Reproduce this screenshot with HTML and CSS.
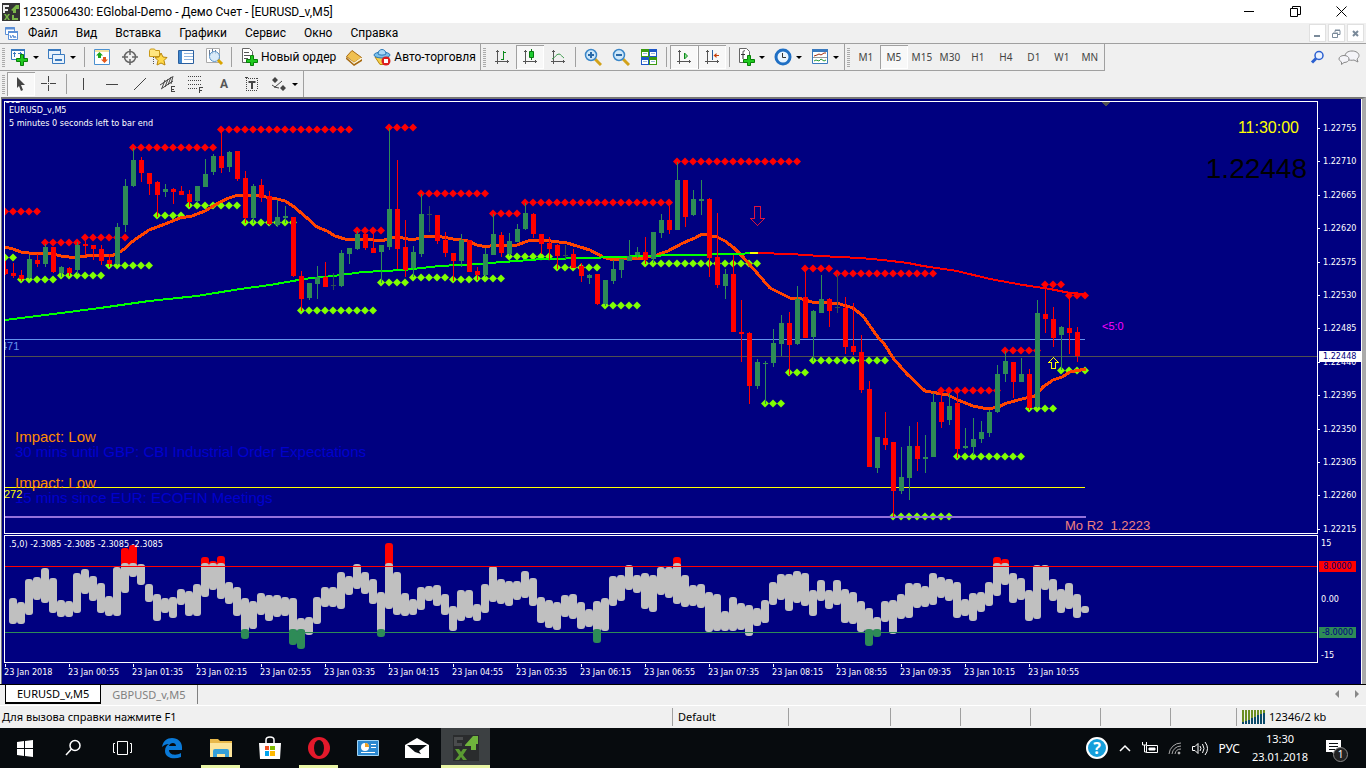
FILE: index.html
```
<!DOCTYPE html>
<html lang="ru">
<head>
	<meta charset="utf-8">
	<title>1235006430: EGlobal-Demo - Демо Счет - [EURUSD_v,M5]</title>
	<link rel="stylesheet" href="styles.css">
</head>
<body>
	<header class="titlebar">
		<svg class="logo" width="18" height="18" viewBox="0 0 18 18"><path fill="#333" d="M0 0h18v18H0z"/><path fill="#eee" d="M1 2h6v2H3v2h3v2H3v2H1z"/><path fill="#7ab648" d="M9 7l5-5h3v4h-3v4h-3V8z"/><path fill="#7ab648" d="M2 11h2l1 2 1-2h2l-2 3 2 3H6l-1-2-1 2H2l2-3zM10 12h2v3h4v2h-6z"/></svg>
		<h1>1235006430: EGlobal-Demo - Демо Счет - [EURUSD_v,M5]</h1>
		<button class="win" aria-label="Свернуть"><svg width="11" height="11"><path d="M0 5.5h10" stroke="#000"/></svg></button>
		<button class="win" aria-label="Восстановить"><svg width="11" height="11" fill="none" stroke="#000"><path d="M.5 2.5h7v8h-7zM2.5 2V.5h8v8H8"/></svg></button>
		<button class="win" aria-label="Закрыть"><svg width="11" height="11"><path d="M.5.5l10 10M10.5.5l-10 10" stroke="#000"/></svg></button>
	</header>

	<nav class="menu">
		<svg class="doc" width="15" height="15" viewBox="0 0 15 15" fill="#fff" stroke="#5b8fd6"><path d="M1.5 1.5h9v7h-9z"/><path d="M1 2.5h10" stroke-width="2"/><path d="M4.5 5.5h9v8h-9z"/><path d="M4 6h10" stroke-width="2"/><path fill="none" d="M6 9l1 3 2-3 1 3 1-2 1 2"/></svg>
		<button>Файл</button>
		<button>Вид</button>
		<button>Вставка</button>
		<button>Графики</button>
		<button>Сервис</button>
		<button>Окно</button>
		<button>Справка</button>
		<div class="mdi">
			<button aria-label="Свернуть график"><svg width="9" height="9"><path fill="#7a8a9a" d="M1 6h6v2H1z"/></svg></button>
			<button aria-label="Восстановить график"><svg width="9" height="9" fill="none" stroke="#7a8a9a"><path d="M.5 4.5h5v4h-5zM3 3V1.500h5v4H6M3 1h5M1 4h5"/></svg></button>
			<button aria-label="Закрыть график"><svg width="9" height="9"><path d="M2 2l5 5M7 2l-5 5" stroke="#7a8a9a" stroke-width="2"/></svg></button>
		</div>
	</nav>

	<div class="bars">
		<div class="bar">
			<div class="band">
				<button class="drop" aria-label="Новый график">
					<svg width="20" height="20" viewBox="0 0 20 20"><path fill="#fff" stroke="#3a7abf" d="M1.5 2.5h13v10h-13z"/><path stroke="#3a7abf" stroke-width="2" d="M1 3h14"/><path stroke="#3a7abf" fill="none" d="M4.5 5v5M3 6.5h3M8 6.5h4M10.5 5v4"/><path fill="#1fc91f" stroke="#078007" d="M10.5 7.5h3v4h4v3h-4v4h-3v-4h-4v-3h4z"/></svg>
				</button>
				<button class="drop" aria-label="Профили">
					<svg width="20" height="20" viewBox="0 0 20 20" fill="#e8f2fb" stroke="#3a7abf"><path d="M1.5 2.5h12v9h-12z"/><path d="M1 3h13" stroke-width="2"/><path d="M5.5 7.5h12v9h-12z"/><path d="M8 13h7" stroke-width="2"/></svg>
				</button>
				<i class="sep"></i>
				<button class="icon" aria-label="Обзор рынка">
					<svg width="18" height="18" viewBox="0 0 18 18"><path fill="#fff" stroke="#4a90d0" d="M1.5 1.5h15v15h-15z"/><path fill="#f4e4a0" d="M2 2h14v2H2z"/><path fill="#1aa51a" d="M6.5 4l3.500 3.500h-2V10H5V7.500H3z"/><path fill="#e5581a" d="M11.500 15L8 11.500h2V9h3v2.500h2z"/></svg>
				</button>
				<button class="icon" aria-label="Окно данных">
					<svg width="18" height="18" viewBox="0 0 18 18" fill="none" stroke="#666"><circle cx="9" cy="9" r="5.5" stroke-width="1.5"/><path d="M9 1v6M9 11v6M1 9h6M11 9h6" stroke-width="1.5"/></svg>
				</button>
				<button class="icon" aria-label="Навигатор">
					<svg width="20" height="20" viewBox="0 0 20 20"><path fill="#ffe680" stroke="#c99a1a" d="M1.500 3.500l1-1.500h4l1 1.500h4v6h-10z"/><path stroke="#555" stroke-dasharray="1 1" d="M5.500 10v7"/><path fill="#ffd94a" stroke="#b8860b" d="M13 6l2 4 4 .5-3 3 1 4.500-4-2-4 2 1-4.500-3-3 4-.5z"/></svg>
				</button>
				<button class="icon" aria-label="Терминал">
					<svg width="18" height="18" viewBox="0 0 18 18"><path fill="#fff" stroke="#2a5f9e" d="M1.5 2.5h15v13h-15z"/><path fill="#3f87cf" d="M2 3h3v12H2z"/><path stroke="#8fb4dd" d="M7 5.5h9M7 8.5h9M7 11.5h9"/></svg>
				</button>
				<button class="icon" aria-label="Тестер стратегий">
					<svg width="20" height="20" viewBox="0 0 20 20"><path fill="#fff" stroke="#aaa" d="M2.5 1.5h13v14h-13z"/><path stroke="#6a7a90" d="M5.5 3v6M8.5 2v5M11.5 3v4"/><circle cx="10.5" cy="9.5" r="5" fill="#cfe6f8" fill-opacity=".8" stroke="#5a93c8"/><path stroke="#d9a400" stroke-width="3" d="M14 13l4 4"/></svg>
				</button>
				<i class="sep"></i>
				<button class="order">
					<svg width="20" height="20" viewBox="0 0 20 20"><path fill="#fff" stroke="#666" d="M3.5 1.5h7l3 3v11h-10z"/><path stroke="#555" d="M5 5.5h5M5 8.5h6M5 11.5h4"/><path fill="#1fc91f" stroke="#078007" d="M11.5 8.5h3v4h4v3h-4v3h-3v-3h-4v-3h4z"/></svg>Новый ордер
				</button>
				<button class="icon" aria-label="MetaEditor">
					<svg width="18" height="18" viewBox="0 0 18 18"><path fill="#a86a10" d="M1 9l8 7 8-5v2l-8 5-8-7z"/><path fill="#f0c050" stroke="#a86a10" d="M7 2.5l9.500 7-7.500 5-7.500-6z"/><path fill="#fff3c8" d="M2 9l7 5.500 7-5v2l-7 4z"/></svg>
				</button>
				<button class="order">
					<svg width="20" height="20" viewBox="0 0 20 20"><path fill="#f4d04a" stroke="#b8860b" d="M3 10h14l-5 7.500H8z"/><ellipse cx="10" cy="8" rx="8" ry="3" fill="#7cc0ea" stroke="#2a7ab8"/><path fill="#a9d8f5" stroke="#2a7ab8" d="M6 7c0-6 8-6 8 0-2 1.500-6 1.500-8 0z"/><circle cx="14" cy="14" r="4.5" fill="#dc1e1e"/><path fill="#fff" d="M12 12h4v4h-4z"/></svg>Авто-торговля
				</button>
			</div>
			<div class="band">
				<button class="icon" aria-label="Бары"><svg width="16" height="16" fill="none" stroke="#555"><path d="M3.5 1v14M1 12.5h14M2 3l1.5-1.5L5 3M13 11l1.5 1.5L13 14"/><path stroke="#0a8a1a" d="M9.5 2v9M7 10.5h2M10 3.5h2"/></svg></button>
				<button class="icon on" aria-label="Свечи"><svg width="16" height="16" fill="none" stroke="#555"><path d="M3.5 1v14M1 12.5h14M2 3l1.5-1.5L5 3M13 11l1.5 1.5L13 14"/><path stroke="#077a10" d="M9.5 0v11"/><path fill="#1ecb32" stroke="#077a10" d="M7.5 2.5h4v6h-4z"/></svg></button>
				<button class="icon" aria-label="Линия"><svg width="16" height="16" fill="none" stroke="#555"><path d="M3.5 1v14M1 12.5h14M2 3l1.5-1.5L5 3M13 11l1.5 1.5L13 14"/><path stroke="#3a9a4a" d="M2 10c3-1 4-5 7-5 2 0 3 3 5 4"/></svg></button>
				<i class="sep"></i>
				<button class="icon" aria-label="Увеличить"><svg width="18" height="18"><path stroke="#d2a21a" stroke-width="3" d="M11 11l6 6"/><circle cx="7" cy="7" r="5.5" fill="#cfe8fa" stroke="#3a86c8" stroke-width="1.5"/><path stroke="#2a6aa8" stroke-width="2" d="M4 7h6M7 4v6"/></svg></button>
				<button class="icon" aria-label="Уменьшить"><svg width="18" height="18"><path stroke="#d2a21a" stroke-width="3" d="M11 11l6 6"/><circle cx="7" cy="7" r="5.5" fill="#cfe8fa" stroke="#3a86c8" stroke-width="1.5"/><path stroke="#2a6aa8" stroke-width="2" d="M4 7h6"/></svg></button>
				<button class="icon" aria-label="Расположить окна"><svg width="18" height="18"><path fill="#3a9a10" d="M1 1h8v8H1zM9 9h8v8H9z"/><path fill="#1c56c8" d="M9 1h8v8H9zM1 9h8v8H1z"/><path fill="#fff" d="M2 4h6v4H2zM10 4h6v4h-6zM2 12h6v4H2zM10 12h6v4h-6z"/><path stroke="#9ab8d8" d="M3 5.5h4M11 5.5h4M3 13.5h4M11 13.5h4"/></svg></button>
				<i class="sep"></i>
				<button class="icon on" aria-label="Автопрокрутка"><svg width="16" height="16" fill="none" stroke="#555"><path d="M3.5 1v14M1 12.5h14M2 3l1.5-1.5L5 3M13 11l1.5 1.5L13 14"/><path fill="#8fdc8f" stroke="#0a8a1a" d="M8.5 4v6l3-3z"/></svg></button>
				<button class="icon on" aria-label="Сдвиг графика"><svg width="16" height="16" fill="none" stroke="#555"><path d="M3.5 1v14M1 12.5h14M2 3l1.5-1.5L5 3M13 11l1.5 1.5L13 14"/><path stroke="#2a5f9e" d="M8.5 1v10"/><path fill="#c8400a" d="M9.5 6.5l3-2.500v5z" stroke="none"/><path stroke="#c8400a" d="M12 6.5h3"/></svg></button>
				<i class="sep"></i>
				<button class="drop" aria-label="Индикаторы"><svg width="20" height="20"><path fill="#fff" stroke="#666" d="M3.5 1.5h7l3 3v11h-10z"/><path fill="none" stroke="#333" d="M9 4c-2-1-2 1-2 3v5M5 7.5h4"/><path fill="#1fc91f" stroke="#078007" d="M11.5 8.5h3v4h4v3h-4v3h-3v-3h-4v-3h4z"/></svg></button>
				<button class="drop" aria-label="Периоды"><svg width="20" height="20"><circle cx="10" cy="10" r="7" fill="#e8f4ff" stroke="#1f6fc4" stroke-width="3"/><path fill="none" stroke="#333" d="M9.5 6v4.500H13"/></svg></button>
				<button class="drop" aria-label="Шаблоны"><svg width="20" height="20"><path fill="#fff" stroke="#3a7abf" d="M2.5 2.5h15v14h-15z"/><path stroke="#3a7abf" stroke-width="3" d="M2 3.5h16"/><path fill="none" stroke="#a03010" d="M4 9l3-1 2-1 2 1 3-2h2"/><path stroke="#999" d="M3 10.5h14"/><path fill="none" stroke="#2a9a3a" d="M4 14l2-1 3 1 2-2 3 2 2-1"/></svg></button>
			</div>
			<div class="band frames">
				<button>M1</button>
				<button class="on">M5</button>
				<button>M15</button>
				<button>M30</button>
				<button>H1</button>
				<button>H4</button>
				<button>D1</button>
				<button>W1</button>
				<button>MN</button>
			</div>
			<div class="right">
				<button aria-label="Поиск"><svg width="16" height="16"><circle cx="9" cy="5.5" r="4" fill="#eaf2ff" stroke="#2a5fd0" stroke-width="1.5"/><path stroke="#2a5fd0" stroke-width="3" d="M6 8.500l-4 4"/></svg></button>
				<button aria-label="Чат"><svg width="22" height="16" viewBox="0 0 22 16" fill="#f4f4f8" stroke="#888"><path d="M14 1c4 0 7 2 7 4.500 0 1.500-1 2.500-2 3.500l1 3-4-2c-5 1-9-1-9-4S10 1 14 1z"/><path d="M6 5.500c3 0 5 1.500 5 3.500s-2 3.500-5 3.500l-2.500 2V12C2 11 1 10 1 9c0-2 2-3.500 5-3.500z"/></svg></button>
			</div>
		</div>
		<div class="bar">
			<div class="band">
				<button class="icon on" aria-label="Курсор"><svg width="16" height="16"><path fill="#444" d="M4 1l8 8H8l2 5-2 1-2-5-2 2z"/></svg></button>
				<button class="icon" aria-label="Перекрестие"><svg width="16" height="16"><path stroke="#444" d="M7.5 0v6M7.5 9v6M0 7.5h6M9 7.5h6M7 7.5h1"/></svg></button>
				<i class="sep"></i>
				<button class="icon" aria-label="Вертикальная линия"><svg width="16" height="16"><path stroke="#444" d="M7.5 2v12"/></svg></button>
				<button class="icon" aria-label="Горизонтальная линия"><svg width="16" height="16"><path stroke="#444" d="M2 8.5h12"/></svg></button>
				<button class="icon" aria-label="Трендовая линия"><svg width="16" height="16"><path stroke="#444" d="M2 14L14 2"/></svg></button>
				<button class="icon" aria-label="Канал"><svg width="18" height="18" fill="none" stroke="#444"><path d="M1 10L13 2M2 14L14 6M3 13L6 5M6 12l3-8M9 10l3-8M12 9l2-8M12.500 11v6M12 11.500h4M12 14.500h3M12 16.500h4"/></svg></button>
				<button class="icon" aria-label="Фибоначчи"><svg width="18" height="18" fill="none" stroke="#444"><path stroke-dasharray="1 1" d="M1 1.5h14M1 5.5h14M1 9.5h14M1 13.5h9"/><path d="M12.5 12v6M12 12.5h4M12 15.5h3"/></svg></button>
				<button class="icon text">A</button>
				<button class="icon" aria-label="Текстовая метка"><svg width="16" height="16" fill="none" stroke="#444"><path stroke-dasharray="1 1" d="M2 2.5h12M2 14.5h12M2.5 2v12M13.5 2v12"/><path stroke-width="2" d="M4.5 6h7M8 6v7"/><path d="M1 1.5h3"/></svg></button>
				<button class="drop" aria-label="Стрелки"><svg width="20" height="20" fill="#444"><path d="M6 3l3 3-3 3-3-3zM14 11l3 3-3 3-3-3z"/><path fill="none" stroke="#444" d="M3 11l3 2 7-6M5 13l5 1"/></svg></button>
			</div>
		</div>
	</div>

	<main class="workspace">
		<section class="plot price">
			<svg id="price"></svg>
			<span class="cut">802</span>
			<p class="info">EURUSD_v,M5<br>5 minutes 0 seconds left to bar end</p>
			<span class="pivot">471</span>
			<p class="news first"><b>Impact: Low</b><br>30 mins until GBP: CBI Industrial Order Expectations</p>
			<p class="news second"><b>Impact: Low</b><br>15 mins since EUR: ECOFIN Meetings</p>
			<span class="low">272</span>
			<span class="countdown">&lt;5:0</span>
			<span class="resist">Mo R2&nbsp; 1.2223</span>
			<time class="clock">11:30:00</time>
			<span class="quote">1.22448</span>
		</section>
		<div class="scale">
			<span>1.22755</span>
			<span>1.22710</span>
			<span>1.22665</span>
			<span>1.22620</span>
			<span>1.22575</span>
			<span>1.22530</span>
			<span>1.22485</span>
			<span>1.22440</span>
			<span>1.22395</span>
			<span>1.22350</span>
			<span>1.22305</span>
			<span>1.22260</span>
			<span>1.22215</span>
			<strong>1.22448</strong>
		</div>
		<section class="plot osc">
			<svg id="osc"></svg>
			<p class="info">.5,0) -2.3085 -2.3085 -2.3085 -2.3085</p>
		</section>
		<div class="levels">
			<span>15</span>
			<span class="hi">8.0000</span>
			<span>0.00</span>
			<span class="lo">-8.0000</span>
			<span>-15</span>
		</div>
		<div class="times" id="times"></div>
	</main>

	<div class="tabs">
		<button class="active">EURUSD_v,M5</button>
		<button>GBPUSD_v,M5</button>
		<svg width="30" height="9" fill="#888"><path d="M7 0v8L3 4zM23 0v8l4-4z"/></svg>
	</div>

	<footer class="status">
		<span class="help">Для вызова справки нажмите F1</span>
		<span class="profile">Default</span>
		<span class="c1"></span>
		<span class="c2"></span>
		<span class="c2"></span>
		<span class="c2"></span>
		<span class="c2"></span>
		<span class="c3"></span>
		<span class="net">
			<svg width="24" height="14"><path stroke="#6b8e23" stroke-width="2" d="M1 0v14M4 0v12M7 0v11M10 0v9M13 0v8M16 0v6M19 0v5M22 0v3"/><path stroke="#0a4a6a" stroke-width="2" d="M1 12v2M4 11v3M7 10v4M10 8v6M13 7v7M16 5v9M19 4v10M22 3v11"/></svg>12346/2 kb
		</span>
	</footer>

	<div class="taskbar">
		<button aria-label="Пуск"><svg width="18" height="18" fill="#fff"><path d="M1 3l7-1v7H1zM9 2l8-1v8H9zM1 10h7v7l-7-1zM9 10h8v8l-8-1z"/></svg></button>
		<button aria-label="Поиск"><svg width="18" height="18" fill="none" stroke="#fff" stroke-width="1.5"><circle cx="10" cy="6.5" r="5"/><path d="M6.5 10L1 16"/></svg></button>
		<button aria-label="Представление задач"><svg width="22" height="18" fill="none" stroke="#fff"><path d="M5.5 2.5h10v13h-10zM3 4.5H1.500v9H3M18 4.5h1.500v9H18"/></svg></button>
		<button aria-label="Edge"><svg width="22" height="22" viewBox="0 0 22 22"><path fill="#0a7ad8" d="M1 10C2 4 6 1 11 1c6 0 10 4 10 9v3H8c0 5 7 6 12 3v4c-7 3-16 1-16-6 0-4 2-6 4-7-3 0-5 1-7 3zm7-1h7c0-4-6-4-7 0z"/></svg></button>
		<button class="open" aria-label="Проводник"><svg width="22" height="20" viewBox="0 0 22 20"><path fill="#e8b84a" d="M0 1h8l2 2h12v16H0z"/><path fill="#fde59a" d="M0 5h22v14H0z"/><path fill="#35a0d8" d="M3 19v-6q0-2 2-2h12q2 0 2 2v6h-4v-3H7v3z"/></svg></button>
		<button aria-label="Магазин"><svg width="22" height="24" viewBox="0 0 22 24"><path fill="none" stroke="#fff" stroke-width="1.5" d="M7 7V4q0-3 4-3t4 3v3"/><path fill="#fff" d="M0 7h22l-1 16H1z"/><path fill="#f25022" d="M6 10h4v4H6z"/><path fill="#7fba00" d="M11 10h5v4h-5z"/><path fill="#00a4ef" d="M6 15h4v5H6z"/><path fill="#ffb900" d="M11 15h5v5h-5z"/></svg></button>
		<button class="open" aria-label="Opera"><svg width="24" height="24"><ellipse cx="12" cy="12" rx="11" ry="11" fill="#e3192b"/><ellipse cx="12" cy="12" rx="5" ry="8" fill="#0a0f12"/></svg></button>
		<button aria-label="Панель управления"><svg width="22" height="16"><path fill="#2b88d0" stroke="#9fd4f4" d="M.5.5h21v15H.5z"/><circle cx="8" cy="7" r="4" fill="#fff"/><path fill="#f2a020" d="M8 7V3a4 4 0 0 1 4 4z"/><path stroke="#fff" d="M14 4.5h5M14 7.5h5M4 12.5h14"/></svg></button>
		<button aria-label="Почта"><svg width="24" height="20"><path fill="#fff" d="M0 7l12-7 12 7v13H0z"/><path fill="#0a0f12" d="M2 7h20l-8 6 2 3-3-1-3-1z"/></svg></button>
		<button class="open current" aria-label="MetaTrader 4"><svg width="26" height="26"><path fill="#2a2c2d" d="M0 0h26v26H0z"/><path fill="#4a4c4d" d="M1 2h9v3H4v3h5v3H1z"/><path fill="#6fb43c" d="M12 10l8-9h5v8h-2v6h-5v-4h-6z"/><path fill="#5a9a32" d="M2 14h4l2 3 2-3h4l-4 6 4 5h-4l-2-3-2 3H2l4-5z"/></svg></button>
		<div class="tray">
			<svg width="24" height="24"><circle cx="12" cy="12" r="10" fill="#169fdb" stroke="#fff" stroke-width="2"/><text x="12" y="18" text-anchor="middle" class="q">?</text></svg>
			<svg width="14" height="10"><path fill="none" stroke="#fff" stroke-width="1.5" d="M2 8l5-5 5 5"/></svg>
			<svg width="18" height="14" fill="none" stroke="#fff"><path d="M5.5 4.5h11v7h-11zM1.5 1v3h4V1M3.5 4v7H6"/><path fill="#fff" d="M8 7h6v2H8z"/></svg>
			<svg width="14" height="14" fill="none" stroke="#aaa"><path d="M1 13A12 12 0 0 1 13 2M4 13a9 9 0 0 1 9-8M7 13a6 6 0 0 1 6-5"/><circle cx="11" cy="12" r="1" fill="#fff"/></svg>
			<svg width="18" height="14" fill="none" stroke="#fff"><path d="M1.5 5.5H4l3-3v10l-3-3H1.500zM9 5q2 2.500 0 5M11.500 3q3 4.500 0 9M14 1q5 6.500 0 13"/></svg>
			<span>РУС</span>
			<time>13:30<br>23.01.2018</time>
			<button aria-label="Уведомления"><svg width="18" height="18"><path fill="#fff" d="M1 1h15v12h-5v4l-4-4H1z"/><path stroke="#0a0f12" d="M4 4.5h9M4 7.5h9M4 10.5h6"/></svg><em>1</em></button>
		</div>
	</div>

	<script>
		// page rows of the two plots, bars are 8px apart
		const STEP = 8, PRICE_TOP = 102, OSC_TOP = 536;

		// high, body top, body bottom, low, direction (u - up, d - down, n - doji)
		let candles = `261 269 274 275 d,263 273 276 278 d,270 275 279 281 d,255 259 278 279 u,254 260 264 267 d,
			244 247 264 267 u,247 247 272 273 d,266 267 273 277 u,267 268 273 276 d,242 245 270 274 u,
			241 244 246 255 d,245 245 249 260 d,245 249 261 265 d,254 260 264 267 d,223 227 264 265 u,
			179 186 225 232 u,148 160 186 187 u,157 160 173 182 d,173 173 184 195 d,181 182 195 217 d,
			184 189 192 197 u,188 189 192 204 d,186 191 195 195 d,190 194 202 207 d,186 186 201 203 u,
			159 174 187 187 u,154 156 172 175 u,130 156 168 173 d,151 152 167 172 u,151 151 179 181 d,
			171 178 218 223 d,184 186 218 223 u,179 185 198 202 d,191 196 224 225 d,200 217 225 227 u,
			206 216 218 223 u,217 217 276 277 d,271 276 299 311 d,283 283 298 300 u,266 277 284 299 u,
			262 277 287 287 d,273 285 286 290 n,250 253 286 287 u,248 248 254 264 u,231 234 249 250 u,
			234 234 248 250 d,232 248 253 253 d,245 245 252 283 u,128 209 247 250 u,160 209 249 269 d,
			220 247 270 277 d,246 252 268 277 u,194 214 254 257 u,206 214 215 232 n,215 215 241 244 d,
			232 240 253 257 d,253 253 261 281 d,234 240 261 267 u,240 240 272 272 d,267 271 275 280 d,
			248 254 275 277 u,214 234 255 255 u,232 235 253 257 d,233 241 254 256 u,224 229 242 242 u,
			203 213 229 230 u,213 214 234 238 d,234 234 244 254 d,237 243 249 260 d,244 245 256 269 d,
			245 255 256 259 n,249 254 268 268 d,263 266 276 282 d,274 275 278 284 u,274 274 304 305 d,
			280 280 304 306 u,260 269 281 284 u,259 259 270 278 u,240 256 261 261 u,247 252 255 258 u,
			237 252 260 264 d,232 232 259 263 u,214 220 233 238 u,206 220 230 234 d,162 180 230 230 u,
			180 180 217 227 d,190 199 215 216 u,180 199 201 215 u,198 199 258 277 d,213 257 285 288 d,
			269 274 286 299 u,255 274 332 332 d,300 332 334 362 d,332 333 386 404 d,359 362 386 389 u,
			361 363 364 404 u,329 343 363 367 u,315 323 344 356 u,312 323 345 375 d,286 299 344 345 u,
			270 297 338 338 d,310 311 337 361 u,275 299 313 313 u,298 299 311 327 d,274 307 308 313 n,
			297 308 347 354 d,303 346 352 355 d,335 352 390 393 d,381 389 467 467 d,437 437 468 473 u,
			412 438 445 450 d,442 442 491 517 d,447 477 491 494 u,426 446 478 500 u,422 446 459 471 d,
			435 457 459 473 u,393 402 457 457 u,392 402 422 428 d,393 406 420 425 u,393 403 449 458 d,
			428 446 448 449 u,418 439 447 455 u,421 432 439 443 u,410 412 433 437 u,365 374 412 413 u,
			351 361 374 382 u,362 362 382 398 d,358 374 382 382 u,369 374 408 410 d,300 313 407 408 u,
			286 314 319 333 d,307 319 338 347 d,326 327 335 370 u,296 328 333 354 d,327 332 356 362 d`;

		// fractal levels: first bar, last bar, y
		let upper = [[0, 4, 211], [5, 9, 242], [10, 15, 237], [16, 26, 147], [27, 43, 129], [44, 47, 230], [48, 51, 127],
			[52, 60, 193], [61, 64, 213], [65, 83, 202], [84, 99, 161], [100, 103, 268], [104, 116, 273], [117, 124, 390],
			[125, 129, 350], [130, 132, 284], [133, 135, 295]];
		let lower = [[0, 1, 257], [2, 6, 279], [7, 12, 275], [13, 18, 265], [19, 22, 215], [23, 29, 205], [30, 36, 222],
			[37, 46, 310], [47, 50, 282], [51, 55, 277], [56, 58, 279], [59, 62, 278], [63, 68, 256], [69, 74, 267],
			[75, 79, 305], [80, 94, 263], [95, 97, 403], [98, 100, 372], [101, 110, 360], [111, 118, 516],
			[119, 127, 456], [128, 131, 408], [132, 135, 370]];

		let averages = {
			"fast": "5,247 13,249 21,252 29,253 45,253 53,254 61,256 69,257 80,257 93,255 105,255 110,256 117,254 123,250 133,241 149,230 165,224 180,218 192,216 205,211 220,202 229,198 238,195 260,196 277,199 285,201 293,206 307,218 317,227 327,231 335,236 345,239 362,239 373,240 382,241 390,238 398,237 413,240 423,237 437,236 453,239 468,241 477,245 487,247 493,245 517,245 528,241 543,240 567,243 580,247 590,250 603,257 610,259 623,259 643,258 657,255 668,251 683,243 695,238 702,234 717,237 725,241 733,247 743,257 757,273 770,288 780,293 790,298 802,299 815,303 822,302 840,304 853,308 863,316 877,336 885,345 893,358 907,374 925,391 948,395 958,400 973,406 988,409 998,407 1007,403 1022,399 1035,396 1043,387 1053,380 1062,377 1070,372 1086,369",
			"slow rise": "5,320 29,317 61,313 100,308 149,301 197,296 240,289 270,285 293,281 303,279 333,276 363,272 403,270 440,266 477,264 503,262 543,259 590,258 613,257 677,255 740,254 750,253",
			"slow turn": "750,253 758,253",
			"slow fall": "758,253 790,254 820,256 840,257 860,258 883,260 908,263 923,266 957,271 990,279 1023,285 1050,289 1070,293 1086,294"
		};

		// oscillator bars from the second one: top, bottom, [peak outside the levels]
		let osc = `598 624,602 624,579 615,577 600,568 603,578 613,600 617,601 617,573 613,569 594,576 601,583 613,596 616,567 616,
			563 593 548,563 577 545,564 585,584 602,594 621,598 613,597 618,589 605,591 616,584 616,563 597 557,563 590 561,563 599 556,
			582 604,587 616,598 632 639,601 629,593 615,595 621,595 617,597 616,598 632 645,618 632 649,617 635,597 624,587 607,587 607,
			572 609,576 595,564 589,572 594,579 604,592 632 637,563 609 543,572 615,593 616,599 615,587 610,586 601,585 606,594 615,
			606 631,590 621,590 618,604 621,584 613,566 602,579 604,581 606,581 600,571 598,578 606,597 623,600 628,602 630,595 617,
			594 619,602 629,609 627,601 632 643,598 631,576 606,575 601,565 590,575 593,573 609,575 612,567 595,567 598,563 604 557,
			575 607,585 606,584 608,592 632,594 631,611 631,597 631,603 630,605 636,608 626,600 623,582 605,574 600,574 611,571 603,
			573 606,590 616,580 601,590 609,580 605,589 623,592 624,601 632,608 632 646,617 632 637,601 622,600 634,594 619,583 618,
			583 608,586 607,573 605,577 598,579 601,582 618,599 616,593 621,592 612,582 606,563 596 557,563 585 559,573 603,578 600,
			590 621,565 619,565 590,579 601,589 613,583 609,594 618,606 613`;

		function rect(x, y, w, h, cls, r = 0) {
			return `<rect class="${cls}" x="${x}" y="${y}" width="${w}" height="${h}" rx="${r}"/>`;
		}
		function diamonds(rows, cls) {
			let d = "";
			for (let [from, to, y] of rows)
				for (let i = from; i <= to; i++)
					d += `M${i * STEP - 4} ${y - PRICE_TOP + 0.5}l4-4 4 4-4 4z`;
			return `<path class="${cls}" d="${d}"/>`;
		}

		function drawPrice() {
			let out = rect(0, 339 - PRICE_TOP, 1080, 1, "line-r1") + rect(0, 487 - PRICE_TOP, 1080, 1, "line-y")
				+ rect(0, 356 - PRICE_TOP, "100%", 1, "line-bid");
			out += diamonds(lower, "dot-low") + rect(0, 516 - PRICE_TOP, 1081, 2, "line-r2");
			out += `<g transform="translate(-5 ${-PRICE_TOP})">`;
			for (let name in averages) out += `<polyline class="ma ${name}" points="${averages[name]}"/>`;
			out += "</g>" + diamonds(upper, "dot-high");
			candles.split(",").forEach((row, i) => {
				let [high, top, bottom, low, dir] = row.trim().split(" ");
				out += rect(i * STEP, high - PRICE_TOP, 1, low - high, "bar-" + dir);
				out += rect(i * STEP - 2, top - PRICE_TOP, 5, bottom - top, "bar-" + dir);
			});
			out += `<path class="mark" d="M1096 0h9l-4 4z"/>`;
			out += `<path class="sell" d="M749.5 104.5h6v12h4l-7 7-7-7h4z"/>`;
			out += `<path class="buy" d="M1046.5 266.5h4v-6h3l-5-5-5 5h3z"/>`;
			price.innerHTML = out;
		}

		function drawOsc() {
			let bars = "", peaks = "";
			osc.split(",").forEach((row, i) => {
				let [top, bottom, peak] = row.trim().split(" ").map(Number);
				let x = (i + 1) * STEP - 4;
				bars += rect(x, top - OSC_TOP, 8, bottom - top, "osc-bar", 3);
				if (!peak) return;
				if (peak < top) bars = rect(x, peak - OSC_TOP, 8, top - peak + 6, "osc-over", 3) + bars;
				else peaks += rect(x, 629 - OSC_TOP, 8, peak - 629, "osc-under", 3);
			});
			oscPlot.innerHTML = bars + peaks + rect(0, 566 - OSC_TOP, "100%", 1, "osc-over") + rect(0, 632 - OSC_TOP, "100%", 1, "osc-under");
		}

		function drawTimes() {
			let labels = ["23 Jan 2018"];
			for (let m = 55; m <= 655; m += 40)
				labels.push("23 Jan " + String(Math.floor(m / 60)).padStart(2, "0") + ":" + String(m % 60).padStart(2, "0"));
			for (let text of labels) times.appendChild(document.createElement("span")).innerText = text;
		}

		let price = document.querySelector("#price");
		let oscPlot = document.querySelector("#osc");
		let times = document.querySelector("#times");
		drawPrice();
		drawOsc();
		drawTimes();
	</script>
</body>
</html>
```
FILE: styles.css
```
:root {
	--face: #f0f0f0;
	--edge: #a0a0a0;
	--navy: #000080;
	--ui: Roboto, 'Open Sans', sans-serif;
	--wide: 'Noto Sans', 'Open Sans', sans-serif;
	--small: 'DejaVu Sans Condensed', 'DejaVu Sans', sans-serif;
	--label: 'Liberation Sans', Arial, sans-serif;
}
* {
	box-sizing: border-box;
}
body {
	margin: 0;
	height: 100vh;
	display: flex;
	flex-direction: column;
	overflow: hidden;
	background: var(--face);
	color: #000;
	font-family: var(--ui);
	font-size: 12px;
}
button {
	border: none;
	padding: 0;
	margin: 0;
	background: none;
	color: inherit;
	font: inherit;
	white-space: nowrap;
}
svg {
	display: block;
	flex: none;
}
p {
	margin: 0;
}

/* title and menu */
.titlebar {
	display: flex;
	align-items: center;
	height: 23px;
	padding: 0 2px;
	background: #fff;
}
.titlebar h1 {
	flex: 1;
	margin: 0 0 0 3px;
	font-size: 12px;
	font-weight: normal;
	white-space: nowrap;
}
.win {
	width: 46px;
	height: 23px;
	display: flex;
	justify-content: center;
	align-items: center;
}
.menu {
	display: flex;
	align-items: center;
	height: 21px;
	padding-left: 4px;
	border-bottom: 1px solid var(--edge);
}
.menu > button {
	padding: 0 9px;
}
.mdi {
	display: flex;
	gap: 2px;
	margin-left: auto;
	padding-right: 2px;
}
.mdi button {
	width: 17px;
	height: 18px;
	display: flex;
	justify-content: center;
	align-items: center;
	background: #fff;
	border: 1px solid #e0e0e0;
}

/* toolbars */
.bar {
	display: flex;
	height: 27px;
}
.bar + .bar {
	height: 26px;
}
.band {
	display: flex;
	align-items: center;
	padding-left: 7px;
	border-right: 1px solid var(--edge);
	border-bottom: 1px solid var(--edge);
	background: repeating-linear-gradient(#aaa 0 1px, var(--face) 1px 2px) 2px 4px / 3px 19px no-repeat;
}
.bar + .bar .band {
	border-bottom: none;
}
.icon, .frames button {
	width: 28px;
	height: 24px;
	display: flex;
	justify-content: center;
	align-items: center;
}
.on {
	background: #f8f8f8;
	box-shadow: inset 1px 1px 0 var(--edge), inset -1px -1px 0 #fff;
}
.drop {
	width: 37px;
	height: 24px;
	display: flex;
	align-items: center;
	gap: 3px;
	padding-left: 3px;
}
.drop::after {
	content: "";
	border: 3px solid transparent;
	border-top-color: #000;
	border-bottom: none;
}
.order {
	display: flex;
	align-items: center;
	gap: 2px;
	height: 24px;
	padding: 0 4px;
}
.sep {
	width: 1px;
	height: 20px;
	margin: 0 3px;
	background: var(--edge);
}
.frames {
	color: #444;
	font-family: var(--wide);
	font-size: 10px;
}
.icon.text {
	color: #555;
	font-weight: bold;
}
.right {
	display: flex;
	align-items: center;
	gap: 12px;
	margin-left: auto;
	padding-right: 6px;
}

/* chart window */
.workspace {
	flex: 1;
	min-height: 0;
	display: grid;
	grid-template-columns: 1fr 44px;
	grid-template-rows: 1fr 128px 20px;
	row-gap: 1px;
	margin-left: 1px;
	padding: 2px 0 0 2px;
	border-top: 2px solid #777;
	border-left: 1px solid #777;
	border-right: 4px solid #aaa;
	box-shadow: inset -1px 0 0 #fff;
	background: var(--navy);
	color: #fff;
	font-family: var(--small);
	font-size: 9px;
}
.plot {
	position: relative;
	overflow: hidden;
	min-height: 0;
	border: 1px solid #fff;
}
.plot svg {
	position: absolute;
	width: 100%;
	height: 100%;
	shape-rendering: crispEdges;
}
.plot span, .plot p, .plot time {
	position: absolute;
	white-space: nowrap;
}
.info {
	left: 4px;
	top: 2px;
	line-height: 13px;
}
.cut {
	left: 0;
	top: -7px;
}
.pivot, .low, .countdown {
	font-family: var(--label);
	font-size: 11px;
}
.pivot {
	left: -4px;
	top: 238px;
	color: #6495ed;
}
.low {
	left: -1px;
	top: 386px;
	color: #ff0;
}
.news {
	left: 10px;
	font-family: var(--label);
	font-size: 15px;
	line-height: 15px;
	color: #0000cd;
}
.news b {
	font-weight: normal;
	color: #ff8c00;
}
.first {
	top: 327px;
}
.second {
	top: 373px;
}
.countdown {
	left: 1097px;
	top: 218px;
	color: #f0f;
}
.resist {
	left: 1060px;
	top: 416px;
	font-family: var(--label);
	font-size: 13px;
	color: #f08080;
}
.clock {
	right: 18px;
	top: 17px;
	font-family: var(--label);
	font-size: 16px;
	color: #ff0;
}
.quote {
	right: 10px;
	top: 51px;
	font-family: var(--label);
	font-size: 28px;
	color: #000;
}
.scale {
	position: relative;
	display: flex;
	flex-direction: column;
	justify-content: space-between;
	padding-top: 23px;
	line-height: 9px;
}
.scale span {
	display: flex;
	align-items: center;
	gap: 3px;
}
.scale span::before {
	content: "";
	width: 2px;
	height: 1px;
	background: #fff;
}
.scale strong {
	position: absolute;
	left: 1px;
	right: 1px;
	top: 250px;
	padding-left: 4px;
	line-height: 11px;
	font-weight: normal;
	background: #fff;
	color: var(--navy);
}
.levels {
	display: grid;
	grid-template-rows: 23px 33px 33px 23px 11px;
	align-items: start;
	justify-items: start;
	padding: 3px 0 0 1px;
	line-height: 11px;
}
.levels span {
	padding: 0 2px;
}
.levels .hi, .levels .lo {
	width: 37px;
	text-align: center;
	background: #f00;
	color: var(--navy);
}
.levels .lo {
	background: #2e8b57;
}
.times {
	grid-column: 1 / 3;
	display: flex;
}
.times span {
	width: 64px;
	flex: none;
	padding-top: 3px;
	background: linear-gradient(#fff, #fff) 1px 0 / 1px 3px no-repeat;
}

/* chart drawing */
.bar-u { fill: #2e8b57; }
.bar-d { fill: #f00; }
.bar-n { fill: #2f4f4f; }
.line-r1 { fill: #6495ed; }
.line-r2 { fill: #9370db; }
.line-y { fill: #ff0; }
.line-bid { fill: #505050; }
.dot-high, .dot-low, .osc-bar, .osc-over, .osc-under {
	shape-rendering: auto;
}
.dot-high { fill: #f00; }
.dot-low { fill: #7fff00; }
.ma {
	fill: none;
	stroke-width: 2;
}
.fast {
	stroke: #ff4500;
	stroke-width: 3;
}
.rise { stroke: #0f0; }
.turn { stroke: #ff0; }
.fall { stroke: #f00; }
.mark { fill: #505050; }
.sell, .buy {
	fill: none;
	stroke: #dc143c;
}
.buy { stroke: #ff0; }
.osc-bar { fill: #c0c0c0; }
.osc-over { fill: #f00; }
.osc-under { fill: #2e8b57; }

/* chart tabs and status line */
.tabs {
	display: flex;
	align-items: flex-start;
	height: 22px;
	padding-left: 5px;
	border-top: 1px solid #000;
	border-bottom: 1px solid #fff;
	font-family: var(--wide);
	font-size: 11px;
}
.tabs button {
	height: 19px;
	padding: 0 11px;
	color: #808080;
	border-right: 1px solid #808080;
}
.tabs .active {
	background: #fff;
	color: #000;
	border: solid #000;
	border-width: 0 1px 2px;
}
.tabs svg {
	margin: 5px 4px 0 auto;
}
.status {
	display: flex;
	align-items: center;
	height: 22px;
	padding-left: 2px;
	font-family: var(--wide);
	font-size: 11px;
}
.status span {
	height: 18px;
	padding-left: 5px;
	line-height: 18px;
	border-left: 1px solid var(--edge);
	white-space: nowrap;
}
.status .help {
	flex: 1;
	padding: 0;
	border: none;
}
.status .profile { width: 116px; }
.status .c1 { width: 102px; }
.status .c2 { width: 70px; }
.status .c3 { width: 66px; }
.status .net {
	width: 130px;
	display: flex;
	align-items: center;
	gap: 3px;
}

/* windows taskbar */
.taskbar {
	display: flex;
	height: 40px;
	background: #070b0e;
	color: #fff;
	font-family: var(--wide);
	font-size: 12px;
}
.taskbar > button {
	width: 49px;
	height: 40px;
	display: flex;
	justify-content: center;
	align-items: center;
}
.taskbar .open {
	background: linear-gradient(#e9f5a5, #e9f5a5) center bottom / 39px 3px no-repeat;
}
.taskbar .current {
	background-color: #3c4042;
	background-size: 49px 3px;
}
.tray {
	display: flex;
	align-items: center;
	gap: 9px;
	margin-left: auto;
	padding-right: 23px;
}
.tray time {
	width: 62px;
	margin-right: 5px;
	font-size: 11px;
	line-height: 18px;
	text-align: center;
}
.tray button {
	position: relative;
}
.tray em {
	position: absolute;
	left: 8px;
	top: 8px;
	width: 15px;
	height: 15px;
	border: 1px solid #888;
	border-radius: 50%;
	background: #222;
	font-size: 10px;
	font-style: normal;
	line-height: 13px;
	text-align: center;
}
.q {
	fill: #fff;
	font-size: 16px;
	font-weight: bold;
}
```
